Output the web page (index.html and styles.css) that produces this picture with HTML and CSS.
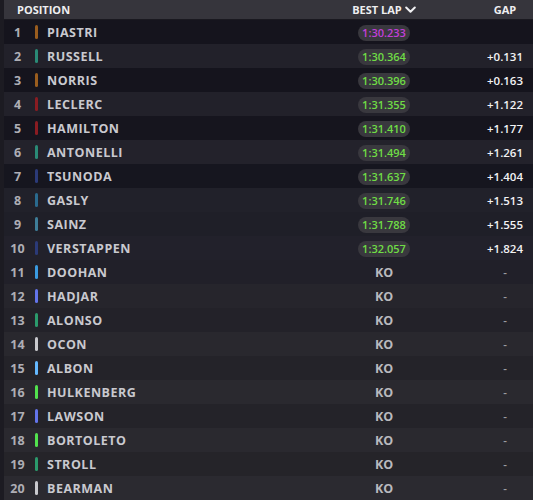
FILE: index.html
```html
<!DOCTYPE html>
<html>
<head>
<meta charset="utf-8">
<link rel="stylesheet" href="styles.css">
</head>
<body>
<div class="board">
  <div class="head">
    <div class="h-pos">POSITION</div>
    <div class="h-lap">BEST LAP <svg class="chev" width="11" height="8" viewBox="0 0 11 8"><path d="M1.2 1.5 L5.5 5.8 L9.8 1.5" fill="none" stroke="#f0f0f2" stroke-width="2" stroke-linecap="round" stroke-linejoin="round"/></svg></div>
    <div class="h-gap">GAP</div>
  </div>

  <div class="row"><span class="num">1</span><span class="bar mcl-d"></span><span class="name">PIASTRI</span><span class="lap"><span class="pill best">1:30.233</span></span><span class="gap"></span></div>
  <div class="row"><span class="num">2</span><span class="bar mer-d"></span><span class="name">RUSSELL</span><span class="lap"><span class="pill">1:30.364</span></span><span class="gap">+0.131</span></div>
  <div class="row"><span class="num">3</span><span class="bar mcl-d"></span><span class="name">NORRIS</span><span class="lap"><span class="pill">1:30.396</span></span><span class="gap">+0.163</span></div>
  <div class="row"><span class="num">4</span><span class="bar fer-d"></span><span class="name">LECLERC</span><span class="lap"><span class="pill">1:31.355</span></span><span class="gap">+1.122</span></div>
  <div class="row"><span class="num">5</span><span class="bar fer-d"></span><span class="name">HAMILTON</span><span class="lap"><span class="pill">1:31.410</span></span><span class="gap">+1.177</span></div>
  <div class="row"><span class="num">6</span><span class="bar mer-d"></span><span class="name">ANTONELLI</span><span class="lap"><span class="pill">1:31.494</span></span><span class="gap">+1.261</span></div>
  <div class="row"><span class="num">7</span><span class="bar rbr-d"></span><span class="name">TSUNODA</span><span class="lap"><span class="pill">1:31.637</span></span><span class="gap">+1.404</span></div>
  <div class="row"><span class="num">8</span><span class="bar alp-d"></span><span class="name">GASLY</span><span class="lap"><span class="pill">1:31.746</span></span><span class="gap">+1.513</span></div>
  <div class="row"><span class="num">9</span><span class="bar wil-d"></span><span class="name">SAINZ</span><span class="lap"><span class="pill">1:31.788</span></span><span class="gap">+1.555</span></div>
  <div class="row"><span class="num">10</span><span class="bar rbr-d"></span><span class="name">VERSTAPPEN</span><span class="lap"><span class="pill">1:32.057</span></span><span class="gap">+1.824</span></div>
  <div class="row"><span class="num">11</span><span class="bar alp"></span><span class="name">DOOHAN</span><span class="lap ko">KO</span><span class="gap dash">-</span></div>
  <div class="row"><span class="num">12</span><span class="bar rb"></span><span class="name">HADJAR</span><span class="lap ko">KO</span><span class="gap dash">-</span></div>
  <div class="row"><span class="num">13</span><span class="bar ams"></span><span class="name">ALONSO</span><span class="lap ko">KO</span><span class="gap dash">-</span></div>
  <div class="row"><span class="num">14</span><span class="bar haa"></span><span class="name">OCON</span><span class="lap ko">KO</span><span class="gap dash">-</span></div>
  <div class="row"><span class="num">15</span><span class="bar wil"></span><span class="name">ALBON</span><span class="lap ko">KO</span><span class="gap dash">-</span></div>
  <div class="row"><span class="num">16</span><span class="bar sau"></span><span class="name">HULKENBERG</span><span class="lap ko">KO</span><span class="gap dash">-</span></div>
  <div class="row"><span class="num">17</span><span class="bar rb"></span><span class="name">LAWSON</span><span class="lap ko">KO</span><span class="gap dash">-</span></div>
  <div class="row"><span class="num">18</span><span class="bar sau"></span><span class="name">BORTOLETO</span><span class="lap ko">KO</span><span class="gap dash">-</span></div>
  <div class="row"><span class="num">19</span><span class="bar ams"></span><span class="name">STROLL</span><span class="lap ko">KO</span><span class="gap dash">-</span></div>
  <div class="row"><span class="num">20</span><span class="bar haa"></span><span class="name">BEARMAN</span><span class="lap ko">KO</span><span class="gap dash">-</span></div>
</div>
</body>
</html>
```

FILE: styles.css
```css
* { box-sizing: border-box; }
html, body {
  margin: 0;
  padding: 0;
  background: #1d1c24;
  font-family: "Open Sans", "Liberation Sans", sans-serif;
  font-weight: 700;
}
.board {
  width: 533px;
  height: 500px;
  overflow: hidden;
  border-left: 4px solid #1c1b22;
}
.head {
  height: 20px;
  background: #36353c;
  display: grid;
  grid-template-columns: 1fr 96px 98px;
  align-items: center;
  padding: 0 3px 0 13px;
  color: #eeeef0;
  font-size: 11px;
  border-bottom: 1px solid #1a1920;
}
.h-lap {
  display: flex;
  align-items: center;
  justify-content: center;
  gap: 3px;
}
.chev { margin-top: 1px; }
.h-gap { text-align: center; padding-left: 48px; }

.row {
  height: 24px;
  display: grid;
  grid-template-columns: 25px 17px 1fr 96px 98px;
  align-items: center;
  padding: 0 3px 0 1px;
  font-size: 12.5px;
}
.row:nth-child(2)  { background: #15141d; }
.row:nth-child(3)  { background: #22212a; }
.row:nth-child(4)  { background: #15141d; }
.row:nth-child(5)  { background: #22212a; }
.row:nth-child(6)  { background: #16151e; }
.row:nth-child(7)  { background: #23222b; }
.row:nth-child(8)  { background: #16161f; }
.row:nth-child(9)  { background: #21212a; }
.row:nth-child(10) { background: #1f1f28; }
.row:nth-child(11) { background: #22212b; }
.row:nth-child(12) { background: #212029; }
.row:nth-child(13) { background: #26252c; }
.row:nth-child(14) { background: #232229; }
.row:nth-child(15) { background: #29282e; }
.row:nth-child(16) { background: #242329; }
.row:nth-child(17) { background: #2a292f; }
.row:nth-child(18) { background: #242329; }
.row:nth-child(19) { background: #2a292f; }
.row:nth-child(20) { background: #252429; }
.row:nth-child(21) { background: #2b2a30; }

.num {
  text-align: center;
  color: #aeaeb5;
}
.bar {
  display: block;
  width: 3px;
  height: 14px;
  border-radius: 1.5px;
  margin-left: 5px;
}
.name {
  color: #c9c9cf;
  letter-spacing: 0.5px;
}
.lap { text-align: center; }
.pill {
  display: inline-block;
  background: #39383e;
  color: #6fdd45;
  border-radius: 8px;
  height: 16px;
  line-height: 16px;
  padding: 0 4px;
  font-size: 11px;
  font-weight: 600;
}
.pill.best { color: #c23fd8; }
.ko { color: #b9b9be; }
.gap {
  text-align: center;
  padding-left: 48px;
  color: #f2f2f4;
  font-size: 11.5px;
  font-weight: 600;
}
.gap.dash { color: #9c9ca2; }

/* top ten: muted team colours */
.mcl-d { background: #9a5d1e; }
.mer-d { background: #2a8a76; }
.fer-d { background: #8a1c22; }
.rbr-d { background: #2b3a78; }
.alp-d { background: #2a6a8e; }
.wil-d { background: #3e7d98; }

/* knocked out: full team colours */
.alp { background: #3a9ae0; }
.rb  { background: #6374ea; }
.ams { background: #2b9a6c; }
.haa { background: #c9c9ce; }
.wil { background: #64b8ff; }
.sau { background: #52e24e; }
```
